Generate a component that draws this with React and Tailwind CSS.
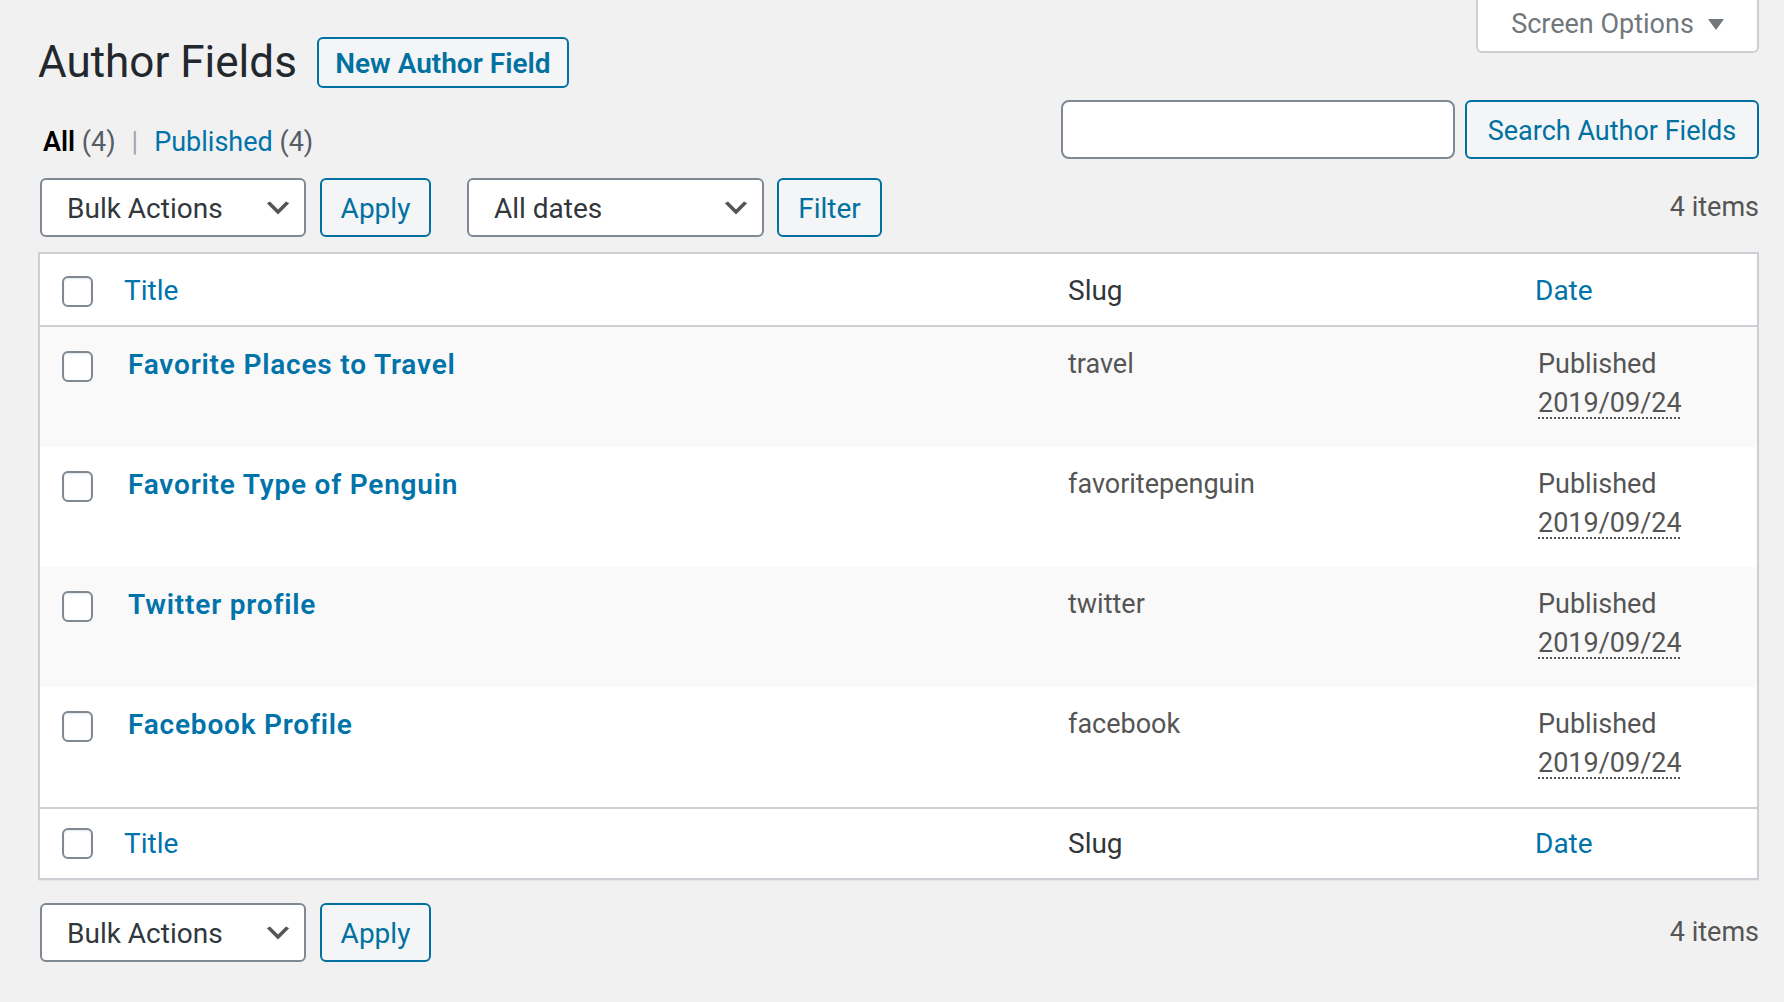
import React from 'react'

const rows = [
    { title: 'Favorite Places to Travel', slug: 'travel' },
    { title: 'Favorite Type of Penguin', slug: 'favoritepenguin' },
    { title: 'Twitter profile', slug: 'twitter' },
    { title: 'Facebook Profile', slug: 'facebook' },
]

function Checkbox() {
    return (
        <span className="block h-[31px] w-[31px] rounded-[6px] border-2 border-[#7e8993] bg-white shadow-[inset_0_1px_2px_rgba(0,0,0,0.1)]" />
    )
}

function Chevron() {
    return (
        <svg width="32" height="32" viewBox="0 0 20 20" className="absolute right-[10px] top-1/2 -translate-y-1/2">
            <path d="M5 6l5 5 5-5 2 1-7 7-7-7 2-1z" fill="#555" />
        </svg>
    )
}

function Select({ label, width }) {
    return (
        <div className={`relative flex h-[59px] items-center rounded-[6px] border-2 border-[#7e8993] bg-white pl-[25px] pt-[3px] text-[28px] text-[#32373c] ${width}`}>
            {label}
            <Chevron />
        </div>
    )
}

function Button({ children, width }) {
    return (
        <button
            type="button"
            className={`flex h-[59px] items-center justify-center rounded-[6px] border-2 border-[#0071a1] bg-[#f3f5f6] pt-[3px] text-[28px] text-[#0071a1] ${width}`}
        >
            {children}
        </button>
    )
}

function HeadRow({ bottom }) {
    return (
        <div
            className={`flex items-center bg-white ${
                bottom ? 'h-[71px] border-t-2 border-[#ccd0d4]' : 'h-[73px] border-b-2 border-[#ccd0d4] pt-[3px]'
            }`}
        >
            <div className="w-[70px] pl-[22px]">
                <Checkbox />
            </div>
            <div className="w-[944px] pl-[14px] text-[28px] text-[#0073aa]">Title</div>
            <div className="w-[467px] pl-[14px] text-[28px] text-[#32373c]">Slug</div>
            <div className="flex-1 pl-[14px] text-[28px] text-[#0073aa]">Date</div>
        </div>
    )
}

export default function App() {
    return (
        <div className="min-h-screen bg-[#f1f1f1] pl-[38px] pr-[25px] font-[Roboto,sans-serif] text-[#555]">
            <div className="flex items-start justify-between">
                <div className="flex items-center gap-[20px] pt-[37px]">
                    <h1 className="text-[44px] leading-[51px] font-normal text-[#23282d]">Author Fields</h1>
                    <button
                        type="button"
                        className="flex h-[51px] w-[252px] items-center justify-center rounded-[6px] border-2 border-[#0071a1] bg-[#f3f5f6] pt-[2px] text-[28px] font-semibold text-[#0071a1]"
                    >
                        New Author Field
                    </button>
                </div>
                <div className="flex h-[53px] w-[283px] items-center justify-center gap-[14px] rounded-b-[6px] border-2 border-t-0 border-[#ccd0d4] bg-white pb-[2px] text-[27px] text-[#72777c]">
                    <span>Screen Options</span>
                    <svg width="16" height="11" viewBox="0 0 16 11">
                        <polygon points="0,0 16,0 8,11" fill="#72777c" />
                    </svg>
                </div>
            </div>

            <div className="mt-[12px] flex h-[59px] items-start justify-between">
                <div className="pl-[5px] pt-[26px] text-[27px] leading-[33px]">
                    <span className="font-semibold text-black">All</span>
                    <span className="text-[#555d66]"> (4)</span>
                    <span className="px-[16px] text-[#a0a5aa]">|</span>
                    <span className="text-[#0073aa]">Published</span>
                    <span className="text-[#555d66]"> (4)</span>
                </div>
                <div className="flex gap-[10px]">
                    <input className="h-[59px] w-[394px] rounded-[8px] border-2 border-[#7e8993] bg-white" />
                    <button
                        type="button"
                        className="flex h-[59px] w-[294px] items-center justify-center rounded-[6px] border-2 border-[#0071a1] bg-[#f3f5f6] pt-[3px] text-[27px] text-[#0071a1]"
                    >
                        Search Author Fields
                    </button>
                </div>
            </div>

            <div className="mt-[19px] flex items-center pl-[2px]">
                <Select label="Bulk Actions" width="w-[266px]" />
                <div className="ml-[14px]">
                    <Button width="w-[111px]">Apply</Button>
                </div>
                <div className="ml-[36px]">
                    <Select label="All dates" width="w-[297px]" />
                </div>
                <div className="ml-[13px]">
                    <Button width="w-[105px]">Filter</Button>
                </div>
                <div className="ml-auto text-[27px] text-[#555]">4 items</div>
            </div>

            <div className="mt-[15px] border-2 border-[#ccd0d4] shadow-[0_1px_1px_rgba(0,0,0,0.04)]">
                <HeadRow />
                {rows.map((row, i) => (
                    <div key={row.slug} className={`flex h-[120px] items-start ${i % 2 === 0 ? 'bg-[#f9f9f9]' : 'bg-white'}`}>
                        <div className="w-[70px] pl-[22px] pt-[24px]">
                            <Checkbox />
                        </div>
                        <div className="w-[944px] pl-[18px] pt-[18px] text-[28px] leading-[39px] font-semibold tracking-[0.8px] text-[#0073aa]">
                            {row.title}
                        </div>
                        <div className="w-[467px] pl-[14px] pt-[18px] text-[27px] leading-[39px] text-[#555]">{row.slug}</div>
                        <div className="flex-1 pl-[17px] pt-[18px] text-[27px] leading-[39px] text-[#555]">
                            <div>Published</div>
                            <abbr className="no-underline" title="2019/09/24">
                                <span className="underline decoration-dotted decoration-[1.5px] underline-offset-[5px]">2019/09/24</span>
                            </abbr>
                        </div>
                    </div>
                ))}
                <HeadRow bottom />
            </div>

            <div className="mt-[23px] flex items-center pl-[2px]">
                <Select label="Bulk Actions" width="w-[266px]" />
                <div className="ml-[14px]">
                    <Button width="w-[111px]">Apply</Button>
                </div>
                <div className="ml-auto text-[27px] text-[#555]">4 items</div>
            </div>
        </div>
    )
}
